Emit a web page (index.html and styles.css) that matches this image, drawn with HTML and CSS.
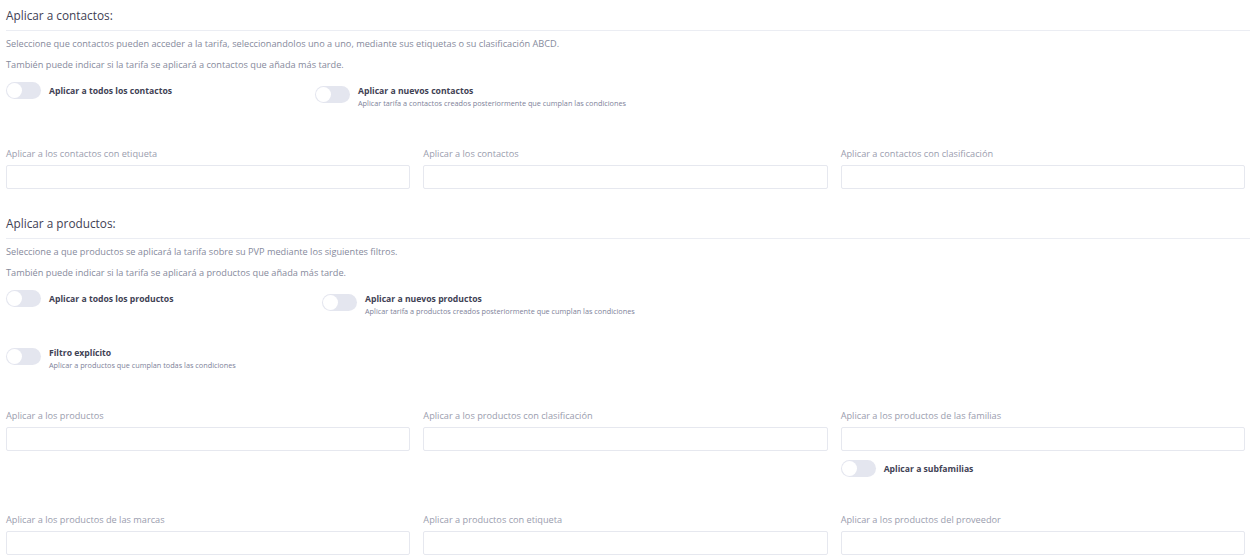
FILE: index.html
```html
<!DOCTYPE html>
<html lang="es">
<head>
<meta charset="utf-8">
<title>Tarifa</title>
<link rel="stylesheet" href="styles.css">
</head>
<body>
<div class="page">
  <section class="section">
    <h2 class="section-title">Aplicar a contactos:</h2>
    <p class="desc desc--first">Seleccione que contactos pueden acceder a la tarifa, seleccionandolos uno a uno, mediante sus etiquetas o su clasificación ABCD.</p>
    <p class="desc">También puede indicar si la tarifa se aplicará a contactos que añada más tarde.</p>
    <div class="switch-row">
      <div class="switch switch--single switch--w1">
        <span class="toggle"><span class="knob"></span></span>
        <span class="switch-title">Aplicar a todos los contactos</span>
      </div>
      <div class="switch switch--double">
        <span class="toggle"><span class="knob"></span></span>
        <div class="switch-text">
          <div class="switch-title">Aplicar a nuevos contactos</div>
          <div class="switch-sub">Aplicar tarifa a contactos creados posteriormente que cumplan las condiciones</div>
        </div>
      </div>
    </div>
    <div class="fields fields--first">
      <div class="field"><label class="field-label">Aplicar a los contactos con etiqueta</label><div class="input"></div></div>
      <div class="field"><label class="field-label">Aplicar a los contactos</label><div class="input"></div></div>
      <div class="field"><label class="field-label">Aplicar a contactos con clasificación</label><div class="input"></div></div>
    </div>
  </section>

  <section class="section section--products">
    <h2 class="section-title">Aplicar a productos:</h2>
    <p class="desc desc--first">Seleccione a que productos se aplicará la tarifa sobre su PVP mediante los siguientes filtros.</p>
    <p class="desc">También puede indicar si la tarifa se aplicará a productos que añada más tarde.</p>
    <div class="switch-row">
      <div class="switch switch--single switch--w2">
        <span class="toggle"><span class="knob"></span></span>
        <span class="switch-title">Aplicar a todos los productos</span>
      </div>
      <div class="switch switch--double">
        <span class="toggle"><span class="knob"></span></span>
        <div class="switch-text">
          <div class="switch-title">Aplicar a nuevos productos</div>
          <div class="switch-sub">Aplicar tarifa a productos creados posteriormente que cumplan las condiciones</div>
        </div>
      </div>
    </div>
    <div class="switch-row switch-row--filter">
      <div class="switch switch--filter">
        <span class="toggle"><span class="knob"></span></span>
        <div class="switch-text">
          <div class="switch-title">Filtro explícito</div>
          <div class="switch-sub">Aplicar a productos que cumplan todas las condiciones</div>
        </div>
      </div>
    </div>
    <div class="fields fields--first">
      <div class="field"><label class="field-label">Aplicar a los productos</label><div class="input"></div></div>
      <div class="field"><label class="field-label">Aplicar a los productos con clasificación</label><div class="input"></div></div>
      <div class="field">
        <label class="field-label">Aplicar a los productos de las familias</label><div class="input"></div>
        <div class="switch switch--single switch--sub">
          <span class="toggle"><span class="knob"></span></span>
          <span class="switch-title">Aplicar a subfamilias</span>
        </div>
      </div>
    </div>
    <div class="fields fields--second">
      <div class="field"><label class="field-label">Aplicar a los productos de las marcas</label><div class="input"></div></div>
      <div class="field"><label class="field-label">Aplicar a productos con etiqueta</label><div class="input"></div></div>
      <div class="field"><label class="field-label">Aplicar a los productos del proveedor</label><div class="input"></div></div>
    </div>
  </section>
</div>
</body>
</html>
```

FILE: styles.css
```css
* { box-sizing: border-box; }
html, body { margin: 0; padding: 0; background: #ffffff; }
body {
  font-family: "Open Sans", "DejaVu Sans", sans-serif;
  color: #7e8299;
  overflow: hidden;
}
.page { padding-left: 6px; }
.section-title {
  margin: 5px 0 0 0;
  font-size: 11.8px;
  line-height: 20px;
  font-weight: 500;
  color: #3f4254;
  padding-bottom: 5px;
  border-bottom: 1px solid #ebedf3;
}
.section--products .section-title { margin-top: 24px; }
.desc {
  margin: 7px 0 0 0;
  font-size: 9.2px;
  line-height: 14px;
  font-weight: 400;
  color: #868a9c;
}
.desc--first { margin-top: 6px; }
.switch-row {
  display: flex;
  align-items: flex-start;
  margin-top: 10px;
}
.switch-row--filter { margin-top: 30px; }
.switch { display: flex; }
.switch--single { align-items: center; }
.switch--w1 { width: 309px; }
.switch--w2 { width: 316px; }
.switch--double { margin-top: 3px; align-items: flex-start; }
.switch--double .toggle, .switch--filter .toggle { margin-top: 1px; }
.toggle {
  flex: none;
  width: 35px;
  height: 17px;
  border-radius: 9px;
  background: #e4e6ef;
  padding: 1px;
  margin-right: 8px;
  display: flex;
}
.knob {
  width: 15px;
  height: 15px;
  border-radius: 50%;
  background: #ffffff;
}
.switch-title {
  font-size: 8.65px;
  line-height: 12px;
  font-weight: 700;
  color: #3f4254;
}
.switch-sub {
  margin-top: 1px;
  font-size: 7.3px;
  line-height: 11px;
  font-weight: 400;
  color: #7e8299;
}
.fields {
  display: grid;
  grid-template-columns: repeat(3, 1fr);
  column-gap: 13px;
  margin-right: 5px;
}
.fields--first { margin-top: 38px; }
.fields--second { margin-top: 36px; }
.field { display: flex; flex-direction: column; }
.field-label {
  font-size: 9.2px;
  line-height: 14px;
  font-weight: 400;
  color: #9a9dae;
  margin-bottom: 4px;
}
.input {
  height: 24px;
  border: 1px solid #e6e8ef;
  border-radius: 2px;
  background: #ffffff;
}
.switch--sub { margin-top: 9px; }
```
